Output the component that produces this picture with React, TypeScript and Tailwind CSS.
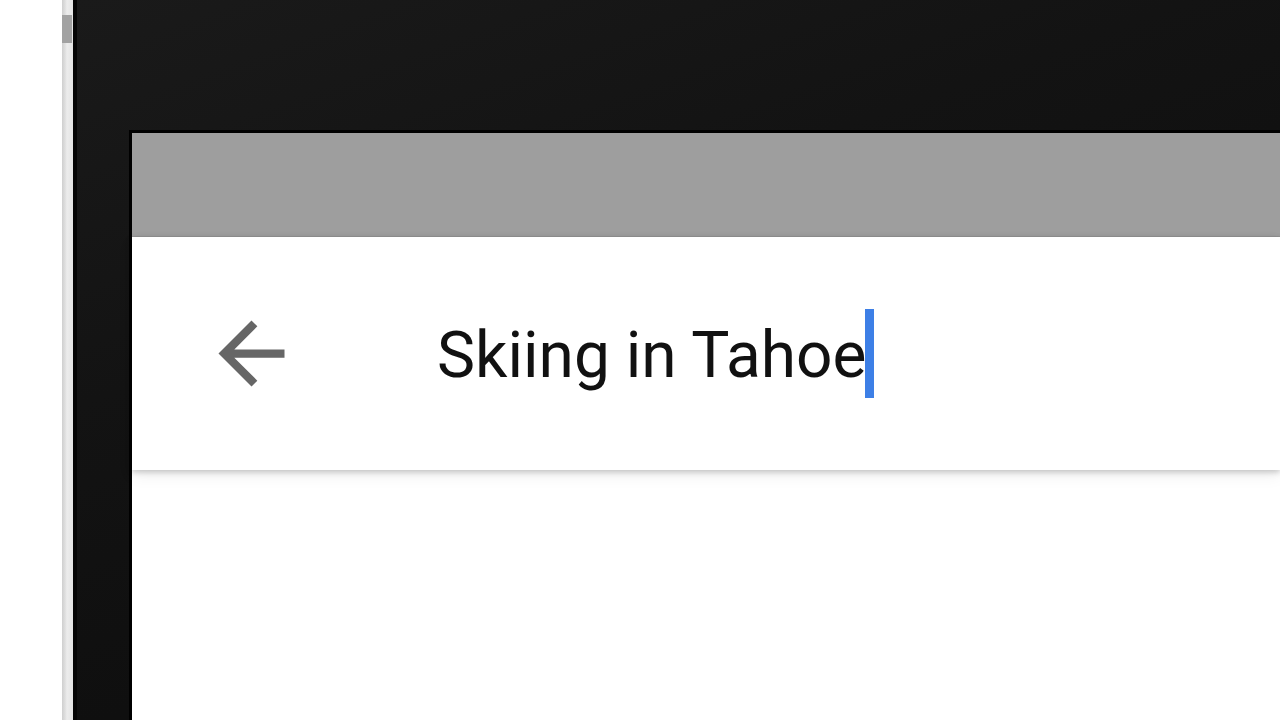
export default function App() {
  return (
    <div className="flex h-[720px] w-[1280px] overflow-hidden bg-white">
      {/* Background left of the phone */}
      <div className="w-[62px] shrink-0 bg-white" />

      {/* Phone side edge with a button */}
      <div className="flex w-[11px] shrink-0 flex-col bg-[linear-gradient(to_right,#cfcfcf_0px,#dedede_3px,#ececec_5px,#e4e4e4_11px)]">
        <div className="h-[15px]" />
        <div className="h-[28px] w-[10px] bg-[#a2a2a2]" />
      </div>

      {/* Bezel */}
      <div className="flex min-w-0 flex-1 flex-col border-l-[4px] border-[#050505] bg-[linear-gradient(160deg,#1a1a1a_0%,#131313_35%,#0e0e0e_70%,#0a0a0a_100%)] pl-[52px] pt-[130px]">
        {/* Screen */}
        <div className="flex flex-1 flex-col border-l-[3px] border-t-[3px] border-black bg-white">
          {/* Status bar */}
          <div className="h-[104px] shrink-0 border-b border-[#939393] bg-[#9e9e9e]" />

          {/* Search app bar */}
          <div className="relative z-10 flex h-[233px] shrink-0 items-center bg-white pl-[70px] shadow-[0_2px_6px_rgba(0,0,0,0.22),0_6px_16px_rgba(0,0,0,0.06)]">
            <svg viewBox="0 0 24 24" className="h-[99px] w-[99px] shrink-0 fill-[#666666]">
              <path d="M20 11H7.83l5.59-5.59L12 4l-8 8 8 8 1.41-1.41L7.83 13H20v-2z" />
            </svg>
            <div className="ml-[136px] flex items-center">
              <span className="mt-[4px] font-['Roboto',sans-serif] text-[64px] leading-none text-[#111111]">
                Skiing in Tahoe
              </span>
              <span className="-ml-[1px] h-[89px] w-[9px] bg-[#3d7fe6]" />
            </div>
          </div>

          {/* Empty content */}
          <div className="flex-1 bg-white" />
        </div>
      </div>
    </div>
  );
}
